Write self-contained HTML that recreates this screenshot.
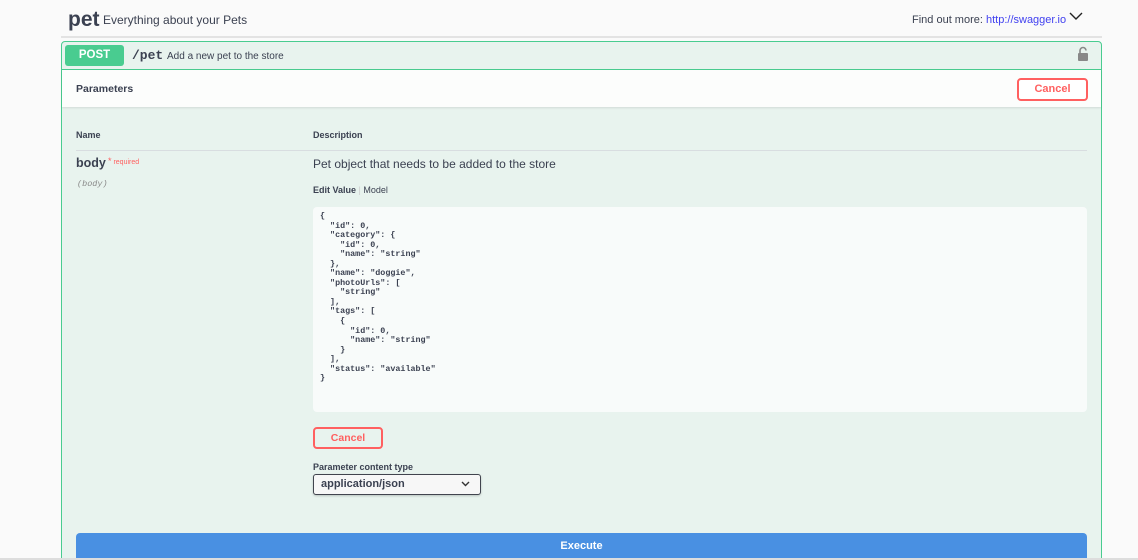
<!DOCTYPE html>
<html style="width:1138px;height:560px;overflow:hidden"><head><style>
body{margin:0;width:1138px;height:560px;background:#fafafa;font-family:"Liberation Sans",sans-serif;color:#3b4151;position:relative;overflow:hidden}
.abs{position:absolute}
.mono{font-family:"Liberation Mono",monospace}
</style></head><body>
<div class="abs" style="left:68px;top:8px;font-size:21px;font-weight:bold">pet</div>
<div class="abs" style="left:103px;top:13px;font-size:12px">Everything about your Pets</div>
<div class="abs" style="left:912px;top:14px;font-size:11px">Find out more: <span style="color:#4141f0">http://swagger.io</span></div>
<svg class="abs" style="left:1069px;top:11px" width="14" height="10"><path d="M1 2 L7 8 L13 2" stroke="#222" stroke-width="1.4" fill="none"/></svg>
<div class="abs" style="left:61px;top:36px;width:1041px;height:2px;background:#e3e3e3"></div>
<div class="abs" style="left:61px;top:41px;width:1039px;height:530px;border:1px solid #49cc90;border-radius:4px;background:#e8f3ee"></div>
<div class="abs" style="left:62px;top:69px;width:1039px;height:1px;background:#49cc90"></div>
<div class="abs" style="left:65px;top:45px;width:59px;height:21px;background:#49cc90;border-radius:3px;color:#fff;font-weight:bold;font-size:11.5px;text-align:center;line-height:21px">POST</div>
<div class="abs mono" style="left:132px;top:48px;font-size:13px;font-weight:bold">/pet</div>
<div class="abs" style="left:167px;top:51px;font-size:10px">Add a new pet to the store</div>
<svg class="abs" style="left:1077px;top:46px" width="12" height="15"><path d="M3 7 V4.5 A3 3 0 0 1 9 4.5" stroke="#888" stroke-width="1.6" fill="none"/><rect x="1" y="7" width="10" height="8" rx="1" fill="#888"/></svg>
<div class="abs" style="left:62px;top:70px;width:1039px;height:37px;background:#fcfdfc;box-shadow:0 1px 2px rgba(0,0,0,.1)"></div>
<div class="abs" style="left:76px;top:83px;font-size:10.5px;font-weight:bold">Parameters</div>
<div class="abs" style="left:1017px;top:78px;width:67px;height:19px;border:2px solid #ff6060;border-radius:4px;background:#fff;color:#ff6060;font-size:11px;font-weight:bold;text-align:center;line-height:19px">Cancel</div>
<div class="abs" style="left:76px;top:130px;font-size:9px;font-weight:bold">Name</div>
<div class="abs" style="left:313px;top:130px;font-size:9px;font-weight:bold">Description</div>
<div class="abs" style="left:76px;top:150px;width:1011px;height:1px;background:#d8dde0"></div>
<div class="abs" style="left:76px;top:156px;font-size:12.5px;font-weight:bold">body</div>
<div class="abs" style="left:108px;top:156px;font-size:7px;color:#ff6060"><span style="font-size:9px">*</span> required</div>
<div class="abs mono" style="left:77px;top:179px;font-size:8.5px;font-style:italic;color:#888">(body)</div>
<div class="abs" style="left:313px;top:157px;font-size:12px">Pet object that needs to be added to the store</div>
<div class="abs" style="left:313px;top:185px;font-size:9px"><b>Edit Value</b> <span style="color:#ccc">|</span> Model</div>
<div class="abs" style="left:313px;top:207px;width:774px;height:205px;background:#f8fbfa;border-radius:4px"></div>
<pre class="abs mono" style="left:320px;top:212px;margin:0;font-size:8.4px;line-height:9.55px;font-weight:bold;color:#3b4151">{
  "id": 0,
  "category": {
    "id": 0,
    "name": "string"
  },
  "name": "doggie",
  "photoUrls": [
    "string"
  ],
  "tags": [
    {
      "id": 0,
      "name": "string"
    }
  ],
  "status": "available"
}</pre>
<div class="abs" style="left:313px;top:427px;width:66px;height:18px;border:2px solid #ff6060;border-radius:4px;color:#ff6060;font-size:10.5px;font-weight:bold;text-align:center;line-height:18px">Cancel</div>
<div class="abs" style="left:313px;top:462px;font-size:9px;font-weight:bold">Parameter content type</div>
<div class="abs" style="left:313px;top:474px;width:166px;height:19px;border:1px solid #41444e;border-radius:3px;background:#f7f7f7;box-shadow:0 1px 2px rgba(0,0,0,.2)"></div>
<div class="abs" style="left:321px;top:478px;font-size:11px;font-weight:bold">application/json</div>
<svg class="abs" style="left:461px;top:481px" width="9" height="6"><path d="M1 1 L4.5 4.5 L8 1" stroke="#333" stroke-width="1.4" fill="none"/></svg>
<div class="abs" style="left:76px;top:533px;width:1011px;height:27px;background:#4990e2;border-radius:4px 4px 0 0;color:#fff;font-size:11px;font-weight:bold;text-align:center;line-height:27px">Execute</div>
<div class="abs" style="left:0;top:558px;width:1138px;height:2px;background:#ddd"></div>
</body></html>
